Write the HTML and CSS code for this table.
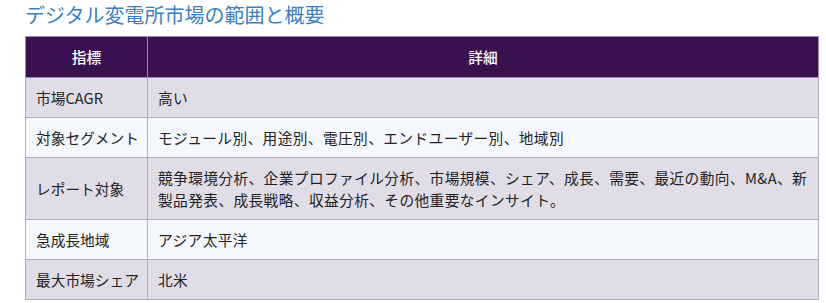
FILE: index.html
```html
<!DOCTYPE html>
<html lang="ja">
<head>
<meta charset="utf-8">
<link rel="stylesheet" href="styles.css">
</head>
<body>
<h2 class="title">デジタル変電所市場の範囲と概要</h2>
<table class="scope">
  <colgroup><col class="c1"><col class="c2"></colgroup>
  <thead>
    <tr><th>指標</th><th>詳細</th></tr>
  </thead>
  <tbody>
    <tr class="odd"><td>市場CAGR</td><td>高い</td></tr>
    <tr class="even"><td>対象セグメント</td><td>モジュール別、用途別、電圧別、エンドユーザー別、地域別</td></tr>
    <tr class="odd tall"><td>レポート対象</td><td>競争環境分析、企業プロファイル分析、市場規模、シェア、成長、需要、最近の動向、M&amp;A、新製品発表、成長戦略、収益分析、その他重要なインサイト。</td></tr>
    <tr class="even"><td>急成長地域</td><td>アジア太平洋</td></tr>
    <tr class="odd"><td>最大市場シェア</td><td>北米</td></tr>
  </tbody>
</table>
</body>
</html>
```
FILE: styles.css
```css
html, body {
  margin: 0;
  padding: 0;
  background: #ffffff;
}
body {
  padding: 0 8px 0 25px;
  font-family: "Noto Sans CJK JP", "Noto Sans", sans-serif;
  color: #222222;
}
.title {
  margin: 0;
  padding-top: 1px;
  height: 35px;
  font-size: 20px;
  font-weight: 400;
  line-height: 28px;
  color: #3b7fc4;
}
.scope {
  width: 794px;
  table-layout: fixed;
  border-collapse: collapse;
  font-size: 14.7px;
  line-height: 22px;
}
.scope col.c1 {
  width: 122px;
}
.scope th {
  background: #3a1150;
  color: #ffffff;
  font-weight: 500;
  height: 40px;
  padding: 0 10px;
  border: 1px solid #9d8bb5;
  text-align: center;
}
.scope td {
  height: 39px;
  padding: 0 10px;
  border: 1px solid #b1aec1;
  vertical-align: middle;
  letter-spacing: 0.4px;
}
.scope td:first-child {
  white-space: nowrap;
  letter-spacing: 0;
}
.scope tr.tall td {
  height: 61px;
}
.scope tr.odd td {
  background: #e0dde9;
}
.scope tr.even td {
  background: #f4f8fc;
}
```
